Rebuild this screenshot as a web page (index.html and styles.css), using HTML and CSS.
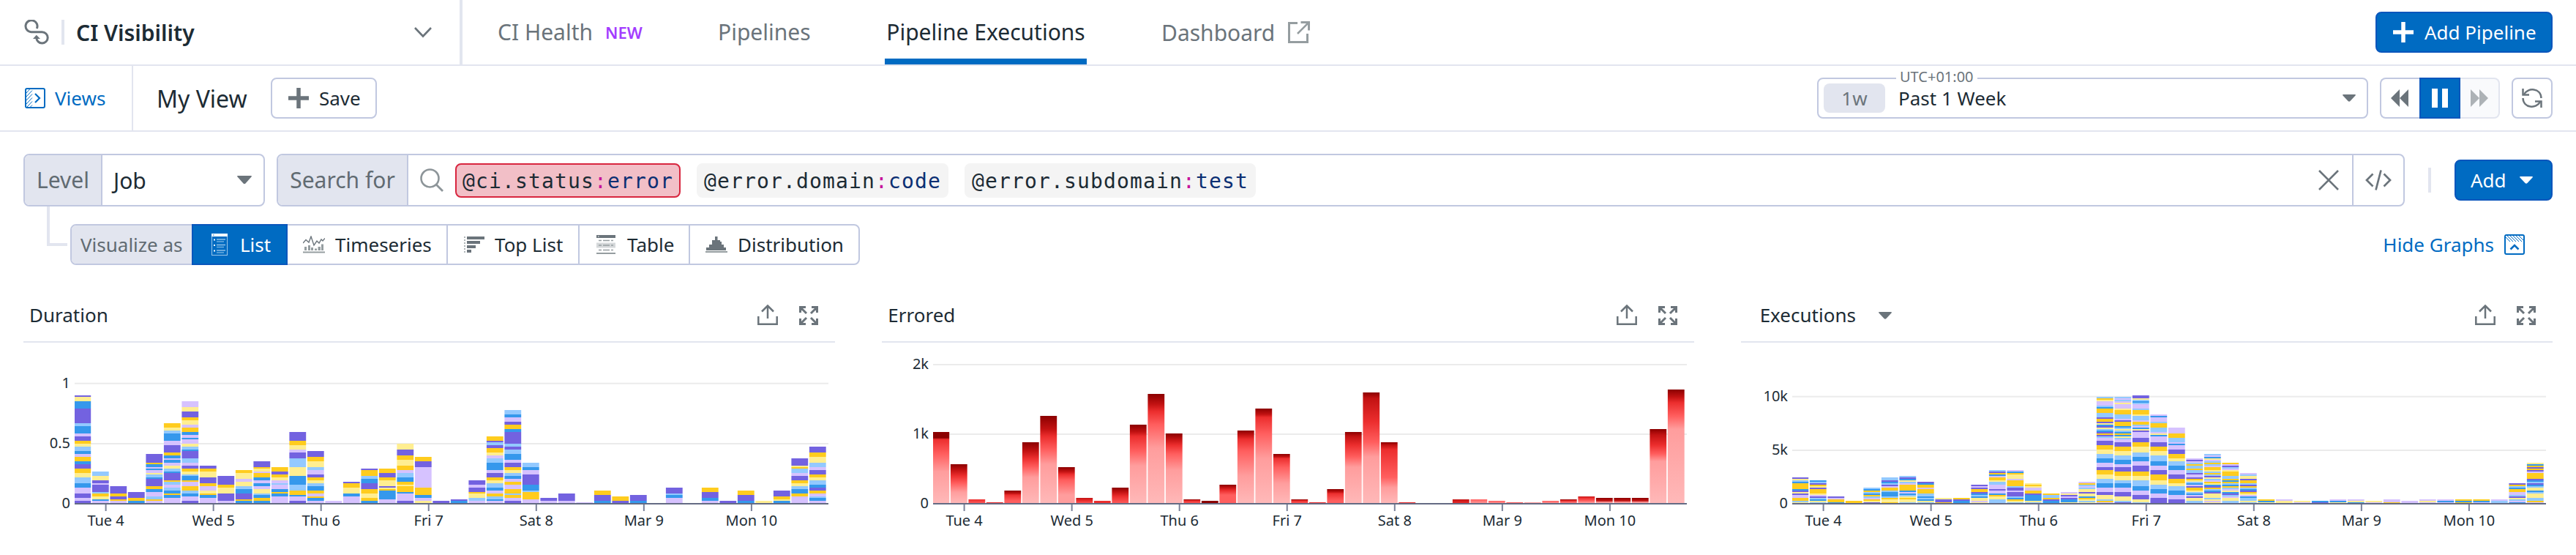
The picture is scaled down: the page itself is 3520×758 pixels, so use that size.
FILE: index.html
```html
<!DOCTYPE html>
<html lang="en">
<head>
<meta charset="utf-8">
<title>CI Visibility</title>
<link rel="stylesheet" href="styles.css">
</head>
<body>
<header class="topbar">
  <div class="product">
    <svg class="product-icon" width="34" height="34" viewBox="0 0 34 34"><path d="M17.300 12A8 8 0 1 0 9.500 16.700H24.500A7.700 7.700 0 1 1 16.800 24.500" fill="none" stroke="#6b747b" stroke-width="3"/><path d="M12 26 16.800 20.800 22 26Z" fill="#6b747b"/></svg>
    <span class="product-rule"></span>
    <span class="product-name">CI Visibility</span>
    <svg class="product-chevron" width="26" height="16" viewBox="0 0 26 16"><path d="M2 2 13 13.500 24 2" fill="none" stroke="#6b747b" stroke-width="2.600"/></svg>
  </div>
  <nav class="tabs">
    <a class="tab tab-health">CI Health<span class="new">NEW</span></a>
    <a class="tab tab-pipelines">Pipelines</a>
    <a class="tab tab-active">Pipeline Executions</a>
    <a class="tab tab-dashboard">Dashboard
      <svg width="32" height="32" viewBox="0 0 32 32" fill="none" stroke="#959da0" stroke-width="3"><path d="M14 3.500H2.500V29.500H27.500V18"/><path d="M14 18 28 4" stroke-width="2.600"/><path d="M18.500 2.500H29.500V13.500"/></svg>
    </a>
  </nav>
  <button class="btn btn-primary add-pipeline">
    <svg width="28" height="28" viewBox="0 0 28 28"><path d="M0 14H28M14 0V28" stroke="#fff" stroke-width="5.500"/></svg>
    <span>Add Pipeline</span>
  </button>
</header>

<section class="viewbar">
  <a class="views">
    <svg width="28" height="28" viewBox="0 0 28 28" fill="none" stroke="#006bc2"><rect x="1" y="1" width="26" height="26" rx="2" stroke-width="2"/><path d="M2 7 6.500 2M2 12 10 3.500M2 17 10 8.500M2 22 10 13.500M3 26 10 18.500M7 26.500 10 23.500" stroke-width="1"/><path d="M14 8 20 14 14 20" stroke-width="2.200"/></svg>
    <span>Views</span>
  </a>
  <div class="view-name">My View</div>
  <button class="btn save">
    <svg width="28" height="28" viewBox="0 0 28 28"><path d="M0 14H28M14 0V28" stroke="#6b747b" stroke-width="5.500"/></svg>
    <span>Save</span>
  </button>
  <div class="time">
    <span class="time-zone">UTC+01:00</span>
    <span class="time-badge">1w</span>
    <span class="time-label">Past 1 Week</span>
    <svg width="18" height="10" viewBox="0 0 18 10"><path d="M1 0H17Q18.500 0 17.500 1.500L10.500 9Q9 10.500 7.500 9L.5 1.500Q-.5 0 1 0Z" fill="#6b747b"/></svg>
  </div>
  <div class="playback">
    <span class="play-btn play-back"><svg width="24" height="24" viewBox="0 0 24 24"><path d="M12 0V24L0 12ZM24 0V24L12 12Z" fill="#6b747b"/></svg></span>
    <span class="play-btn play-pause"><svg width="22" height="26" viewBox="0 0 22 26"><path d="M0 0H8V26H0ZM14 0H22V26H14Z" fill="#fff"/></svg></span>
    <span class="play-btn play-forward"><svg width="24" height="24" viewBox="0 0 24 24"><path d="M0 0V24L12 12ZM12 0V24L24 12Z" fill="#adb2b6"/></svg></span>
  </div>
  <button class="btn refresh">
    <svg width="28" height="28" viewBox="0 0 28 28" fill="none" stroke="#6b747b" stroke-width="2.500"><path d="M3 9C8-1 26 0 26.500 14"/><path d="M1.500 1V9.500H10"/><path d="M1.500 14C2 28 20 29 25 19"/><path d="M18 18.500H26.500V27"/></svg>
  </button>
</section>

<main class="content">
  <section class="query">
    <div class="level">
      <span class="box-label">Level</span>
      <span class="level-value">Job</span>
      <svg width="20" height="12" viewBox="0 0 20 12"><path d="M1 0H19Q20.500 0 19.500 1.500L11.500 10.500Q10 12 8.500 10.500L.5 1.500Q-.5 0 1 0Z" fill="#6b747b"/></svg>
    </div>
    <div class="search">
      <span class="box-label search-label">Search for</span>
      <svg class="search-icon" width="32" height="32" viewBox="0 0 32 32" fill="none" stroke="#8d9599"><circle cx="13.500" cy="13.500" r="12" stroke-width="2.600"/><path d="M22 22 31 31" stroke-width="2.800"/></svg>
      <span class="chip chip-error">@ci.status<i>:</i><b>error</b></span>
      <span class="chip">@error.domain<i>:</i><b>code</b></span>
      <span class="chip">@error.subdomain<i>:</i><b>test</b></span>
      <svg class="clear" width="30" height="30" viewBox="0 0 30 30"><path d="M2 2 28 28M28 2 2 28" stroke="#6b747b" stroke-width="2.600"/></svg>
      <span class="code-toggle"><svg width="36" height="28" viewBox="0 0 36 28" fill="none" stroke="#6b747b" stroke-width="2.700"><path d="M10.500 5.500 2 14 10.500 22.500M25.500 5.500 34 14 25.500 22.500M21.500 .5 14.500 27.500"/></svg></span>
    </div>
    <span class="query-rule"></span>
    <button class="btn btn-primary add">
      <span>Add</span>
      <svg width="18" height="10" viewBox="0 0 18 10"><path d="M1 0H17Q18.500 0 17.500 1.500L10.500 9Q9 10.500 7.500 9L.5 1.500Q-.5 0 1 0Z" fill="#fff"/></svg>
    </button>
  </section>

  <section class="visualize-row">
    <span class="connector"></span>
    <div class="visualize">
      <span class="viz-label">Visualize as</span>
      <span class="viz viz-list"><svg width="22" height="30" viewBox="0 0 22 30"><rect x=".5" y=".5" width="21" height="29" fill="none" stroke="#9cc6ea"/><path d="M0 0H22V4H0Z" fill="#fff"/><path d="M2 2H3.500" stroke="#006bc2"/><path d="M3 8.500H5M3 16H5M3 23.500H5" stroke="#fff" stroke-width="2"/><path d="M7 8H19M7 15.500H19M7 23H19" stroke="#8fc0e8" stroke-width="1.500"/><path d="M7 11H17M7 18.500H17M7 26H17" stroke="#6daddf" stroke-width="1.500"/></svg>List</span>
      <span class="viz viz-time"><svg width="30" height="24" viewBox="0 0 30 24"><path d="M0 10 4 5.500 8 9 11 1 15 13 19 7 22 10 25 5 27 7 30 3.500" fill="none" stroke="#6b747b" stroke-width="1.400"/><path d="M2 15H5V20H2ZM7 13H10V20H7ZM11 16H14V20H11ZM16 17.500H19V20H16ZM20.500 15H24V20H20.500ZM25 11.500H28V20H25ZM0 21.500H30V23.500H0Z" fill="#959da0"/></svg>Timeseries</span>
      <span class="viz viz-top"><svg width="28" height="24" viewBox="0 0 28 24"><path d="M4 1H28V5H4ZM4 7H22V11H4ZM4 13H16V17H4ZM4 19H10V23H4Z" fill="#6b747b"/><path d="M1 1V24" stroke="#959da0" stroke-width="1.500" stroke-dasharray="2 2"/></svg>Top List</span>
      <span class="viz viz-table"><svg width="26" height="26" viewBox="0 0 26 26"><path d="M0 0H26V4H0Z" fill="#6b747b"/><path d="M0 10.500H26V17.500H0Z" fill="#d5d8da"/><path d="M3 7.500H7M9 7.500H18M20 7.500H23M3 14H7M9 14H18M20 14H23M3 20.500H7M9 20.500H18M20 20.500H23" stroke="#959da0" stroke-width="1.500"/><path d="M2 2H3.500" stroke="#fff"/><path d="M0 24H26V26H0Z" fill="#959da0"/></svg>Table</span>
      <span class="viz viz-dist"><svg width="30" height="22" viewBox="0 0 30 22"><path d="M1 19V15H5V11H9V5H13V0H16.500V5H20V7H22V11H25V15H28V19Z" fill="#6b747b"/><path d="M0 20H30V22H0Z" fill="#959da0"/></svg>Distribution</span>
    </div>
    <a class="hide-graphs">Hide Graphs
      <svg width="28" height="28" viewBox="0 0 28 28" fill="none" stroke="#006bc2"><rect x="1" y="1" width="26" height="26" rx="2" stroke-width="2"/><path d="M2 4 8 10M4 2 12 10M8 2 16 10M12 2 20 10M16 2 24 10M20 2 26 8" stroke-width="1"/><path d="M8.500 20.500 14 15 19.500 20.500" stroke-width="2.600"/></svg>
    </a>
  </section>

  <section class="charts">
    <article class="chart">
      <header class="chart-head"><h2>Duration</h2><span class="chart-tools"></span></header>
      <svg class="plot" data-chart="duration" width="1109" height="290"></svg>
    </article>
    <article class="chart">
      <header class="chart-head"><h2>Errored</h2><span class="chart-tools"></span></header>
      <svg class="plot" data-chart="errored" width="1109" height="290"></svg>
    </article>
    <article class="chart">
      <header class="chart-head chart-head-select"><h2>Executions</h2>
        <svg class="title-caret" width="18" height="10" viewBox="0 0 18 10"><path d="M1 0H17Q18.500 0 17.500 1.500L10.500 9Q9 10.500 7.500 9L.5 1.500Q-.5 0 1 0Z" fill="#6b747b"/></svg>
        <span class="chart-tools"></span></header>
      <svg class="plot" data-chart="executions" width="1109" height="290"></svg>
    </article>
  </section>
</main>
<script src="charts.js"></script>
</body>
</html>
```
FILE: styles.css
```css
* { box-sizing: border-box; }
body {
  margin: 0;
  width: 3520px;
  height: 758px;
  overflow: hidden;
  background: #fff;
  color: #1c2b34;
  font-family: "Noto Sans", "Open Sans", sans-serif;
  font-size: 26px;
  white-space: nowrap;
}
svg { display: block; flex: none; }
h2 { margin: 0; font-size: 26px; font-weight: 400; }
a { color: inherit; }

.btn {
  display: flex;
  align-items: center;
  height: 56px;
  padding: 0;
  border: 2px solid #c1c8e0;
  border-radius: 8px;
  background: #fff;
  color: #1c2b34;
  font: inherit;
}
.btn-primary { background: #006bc2; border-color: #0a56bc; color: #fff; }

/* Top bar */
.topbar { display: flex; align-items: center; height: 90px; border-bottom: 2px solid #e2e5ef; }
.product { display: flex; align-items: center; width: 632px; height: 88px; padding-left: 33px; border-right: 4px solid #e2e5ef; }
.product-rule { width: 4px; height: 34px; margin: 0 16px 0 17px; background: #e2e5ef; }
.product-name { width: 461px; font-size: 30px; font-weight: 600; }
.tabs { display: flex; flex: 1; height: 88px; font-size: 30px; line-height: 87px; color: #6b747b; }
.tab-health { display: flex; width: 301px; margin-left: 48px; }
.new { margin-left: 17px; color: #a33cff; font-size: 22px; font-weight: 600; line-height: 89px; }
.tab-pipelines { width: 228px; }
.tab-active { width: 276px; border-bottom: 8px solid #006bc2; color: #1c2b34; text-align: center; }
.tab-dashboard { display: flex; align-items: center; gap: 17px; margin-left: 102px; }
.add-pipeline { width: 242px; margin-right: 32px; padding-left: 22px; gap: 15px; }

/* View bar */
.viewbar { display: flex; align-items: center; height: 90px; border-bottom: 2px solid #e2e5ef; }
.views { display: flex; align-items: center; gap: 13px; width: 182px; height: 88px; padding-left: 34px; border-right: 2px solid #e2e5ef; color: #006bc2; }
.view-name { width: 188px; padding-left: 32px; font-size: 32px; }
.save { width: 145px; padding-left: 22px; gap: 14px; }
.time { position: relative; display: flex; align-items: center; width: 753px; height: 56px; margin-left: auto; padding: 0 15px 0 7px; border: 2px solid #c1c8e0; border-radius: 8px; }
.time-zone { position: absolute; left: 106px; top: -17px; padding: 0 5px; background: #fff; color: #6b747b; font-size: 20px; line-height: 28px; }
.time-badge { width: 84px; height: 40px; border-radius: 8px; background: #e2e5ef; color: #6b747b; line-height: 40px; text-align: center; }
.time-label { flex: 1; padding-left: 18px; }
.playback { display: flex; margin-left: 16px; }
.play-btn { display: flex; align-items: center; justify-content: center; width: 54px; height: 56px; border: 2px solid #c1c8e0; }
.play-back { padding-right: 2px; border-right: 0; border-radius: 8px 0 0 8px; }
.play-pause { width: 56px; background: #006bc2; border-color: #0a56bc; }
.play-forward { border-color: #e2e5ef; border-left: 0; border-radius: 0 8px 8px 0; background: #f9fafc; }
.refresh { width: 56px; margin: 0 32px 0 16px; justify-content: center; }

/* Query row */
.content { padding: 30px 32px 0; }
.query { display: flex; align-items: center; height: 72px; }
.level, .search { display: flex; align-items: center; height: 72px; border: 2px solid #c1c8e0; border-radius: 8px; font-size: 30px; }
.level { width: 330px; }
.box-label { width: 106px; height: 68px; border-right: 2px solid #c1c8e0; border-radius: 6px 0 0 6px; background: #e2e5ef; color: #616b72; line-height: 67px; text-align: center; }
.level-value { width: 184px; padding-left: 15px; }
.search { width: 2908px; margin-left: 16px; }
.search-label { width: 178px; }
.search-icon { margin: 0 15px 0 16px; }
.chip { height: 47px; margin-right: 22px; padding: 1px 10px 0; border-radius: 8px; background: #f4f4f4; font-family: "DejaVu Sans Mono", "Liberation Mono", monospace; font-size: 28px; letter-spacing: 1.140px; line-height: 47px; }
.chip i { color: #c6139b; font-style: normal; }
.chip b { color: #0b2f73; font-weight: 400; }
.chip-error { margin-left: 1px; padding: 0 8px; border: 2px solid #d8263f; background: #f2bfc7; line-height: 45px; }
.clear { margin-left: auto; margin-right: 17px; }
.code-toggle { display: flex; align-items: center; justify-content: center; width: 70px; height: 68px; border-left: 2px solid #c1c8e0; }
.query-rule { width: 4px; height: 34px; margin: 0 32px; background: #e2e5ef; }
.add { width: 134px; padding-left: 20px; gap: 18px; }

/* Visualization picker */
.visualize-row { display: flex; height: 80px; }
.connector { width: 28px; height: 54px; margin: 0 4px 0 32px; border: solid #e2e5ef; border-width: 0 0 4px 4px; }
.visualize { display: flex; width: 1079px; height: 56px; margin-top: 24px; border: 2px solid #c1c8e0; border-radius: 8px; }
.viz-label { width: 164px; border-radius: 6px 0 0 6px; background: #e2e5ef; color: #616b72; line-height: 52px; padding-left: 12px; }
.viz { display: flex; align-items: center; border-right: 2px solid #c1c8e0; }
.viz-list { width: 131px; height: 56px; margin-top: -2px; padding-left: 25px; gap: 17px; border: 2px solid #0a56bc; background: #006bc2; color: #fff; }
.viz-time { width: 219px; padding-left: 21px; gap: 14px; }
.viz-top { width: 180px; padding-left: 22px; gap: 14px; }
.viz-table { width: 151px; padding-left: 23px; gap: 16px; }
.viz-dist { padding-left: 21px; gap: 14px; border: 0; }
.hide-graphs { display: flex; align-items: center; gap: 14px; height: 56px; margin: 24px 38px 0 auto; color: #006bc2; }

/* Charts */
.charts { display: grid; grid-template-columns: repeat(3, 1fr); gap: 64px; padding-top: 34px; }
.chart-head { display: flex; align-items: center; height: 72px; padding: 0 23px 0 8px; border-bottom: 2px solid #e2e5ef; }
.chart-head h2 { padding-bottom: 2px; }
.chart-head-select { padding-left: 26px; }
.title-caret { margin-left: 31px; }
.chart-tools { display: flex; gap: 29px; margin-left: auto; padding-bottom: 2px; }
.plot { overflow: visible; }
.plot text { fill: #1c2b34; font-size: 20px; }
.y-label { text-anchor: end; }
.x-label { text-anchor: middle; }
```
FILE: charts.js
```js
const NS = "http://www.w3.org/2000/svg";
const UNIT = 2;          // height of one stack unit in px
const BASE = 149;        // unit index of the zero line
const PLOT_TOP = -78;    // unit 0 relative to the top of the plot
const LEFT = 70;
const WIDTH = 1030;
const PITCH = 24.5;
const BAR = 22.8;

const STACK = { P: "#7362e0", L: "#d6c2ff", B: "#3598ec", S: "#93c9ff", Y: "#ffcc1e", C: "#ffee91" };
const HEAT = { a: "#8b0000", b: "#c21212", c: "#ec2e2e", d: "#ff5e5e", e: "#ff9d9d", f: "#ffb9b9" };

// Each bar is a run of <top unit><colour key>, from the top down.
const CHARTS = {
  duration: {
    ticks: [["1", 55.7], ["0.5", 138], ["0", 220]],
    bars: `75P76C79B84P94S96B101L103P106Y108C110S113B115L117Y120B122P125Y128C131S135B138L142P145L147P
127S130C133P135L136P141S142Y144C146B147L
137P142Y144P146Y147L
141P145Y147B
115P121Y122B124L125B126L128C129S131B132P137Y139B141L144S146Y147L
94Y97C99S101B106L109P114Y116B118L119B121L123C125S127B128P133Y134S136L138S140B142Y143B145L
79L83C86P90Y92C95L97Y100B102L104B105L108C110S112B113P118S121L123P125Y127C129S130B133Y134L137Y140S142B144L147P
123P125Y127C131P135Y137L140C142Y143B145L
130P136Y138C142P147L
126Y128C132L134C137S139B142P146Y147B
120P124Y125C127L128Y131B133L135B137L139C142S143B145Y147B
124Y127P129Y131C133L135S136L139B141Y142B144L
100P106Y109C112L114P118S124C130B136S140Y143B144L147P
113P117Y120C124S126L129P131Y133C135S137B140Y142L144Y145B147L
147L
134P135Y138C142B144L
125P126Y130S132B135P139Y142C145Y147B
125Y128P131Y133C137P138C139Y140B146L
108C112P116Y119C123Y126L128S131B134Y136C137Y141B142L147P
117Y120P124L138Y143B145L147C
147P
146P147B
133P136L138P141Y142C145S147L
103Y106P107S109P111Y114C116L118S121B126L128P131Y133C135S138B140L142Y144S146B147L
85S88B90L93P95Y98B100P108S110P112S115B119L121P124Y126C128S130B132L134Y136L139Y142S143Y145L147P
121S124B126L129P136B140S141Y146L
145P147L
142P147L
148L
140Y143P147B
144Y147P
143P147B
-
138P142S143B145L
-
138Y141P145B147L
147P
140Y143P147B
147C
140P144Y146C147B
118P123C124Y125S128L130P133Y135C137S139B142Y144L
110P114Y117C121S124L126P129Y131C133S136B138P140Y142L144S145B147L`
  },
  errored: {
    heat: true,
    ticks: [["2k", 30], ["1k", 125], ["0", 220]],
    bars: `100a104a105c115d127e149f
122a126b130c135d141e149f
146c149d
148c149c
140a142b143c147d149d
107a113b118c124d131e149f
89a98b103c112d122e149f
124a127b129c133d143e149e
145b147c149d
147c149c
138a141b144c149d
95a100b103c113d123e149f
74a81b86c95d111e149f
101a105b109c115d126e149f
146a147c149d
147a149a
136a138b140c143d149d
99a102b105c113d130e149f
84a88b90c101d118e149f
115a117b118c124d135e149f
146a147c149d
148c149c
139a141b142c147d149d
100a103b109c117d124e149f
73a77b93c107d117e149f
107a109b112c131d138e149f
148c149c
-
-
146b149c
146d149e
147d149e
148d149d
148e149e
147d149e
146a147c149e
144b145c147d149f
145a147b148e149f
145a147b148e149f
145a147b148e149f
98a102b109c115d120e149f
71a76b80c89d98e149f`
  },
  executions: {
    ticks: [["10k", 73.7], ["5k", 147], ["0", 220]],
    bars: `131P132C133S134B135Y139B140P141C142P143L145Y147S148C
133B134S135P136Y137C138P139Y142C143L144P145S146B147C148S
144P145L146Y148B
147Y
138S139B140Y141S142B143Y144S145L146Y147C148P
131S133P134B135S136P137L138Y140S141B144S145Y146C148Y
130S131P132B133C134S135L136Y140B141L142B143S144C145Y146C148S
134P135B136Y138L139Y142S144B145S146B147C148S
145C146P148Y
145Y146P147B
136P137L138P139Y141P142B143S144B145C147L148C
126S127P128Y129B130L131Y133C134S136L139P140L142B143Y144C146S
126L127B128Y129C132L133Y137S138P140L141P143P144S145B146Y147C148S
135C136Y137C138L140Y142P143B147C148S
142Y143S145Y146P147B
141L142C143P144L145P146B148C
134L135Y136S137L138S139C141P142C144B145Y146C147S148C
76S77Y78C79L82S83B84Y87S90P91Y93P94C95B96P97C98S99B100P101Y102P103S104L106P109Y112C115S118B121L124P126Y129C132S135B138L141P143C146S147Y148L
76S77L78S79L80C81L84C85Y88S91L92P93Y96B97S98C99S100B101Y102B103C104S105L107P110Y113C116S119B122L124P127Y130C133S135B138L141P144C147S148P
75P77C78S79B80S81L84S85Y88C89S92L93Y95S96L97B98C99P100L104P107Y110C114S117B120L123P127Y130C133S137B140L143P146C148S
88L89B90L93S94Y97S100L101C102B103L107P110Y113C116S120B123L126P129Y133C136S139B142L145P
97L101Y104S107L108B109L112P115Y118C120S123B126L129P132Y135C137S140B143L146P
118L119P120L121S122Y123S125Y126S128P129L131P132Y133C134S135B136L137P138Y140C141S142B143L144P145C147S
115S116L117B118C119L120S121Y122S123L124Y126C127S128Y129S130P131C132S133L134Y135C136B137P138Y139S140B141P142C145S146C147L148C
121Y122L123P124S125L126C127Y130S132Y133B134Y135S136B137Y138S139L140C141B142P143S144L145C147S
128L129S130C132P133Y135S136P137Y138S139B140P141Y142C143L144B145S147C148S
146Y147B148C
146L147C
147C148L
147B148P
146L147B148C
146L147C148B
147C148L
146L148Y
147L
146L147C148L
146L147B148L
146Y147B148Y
146Y147B148L
146L147S
135P136Y137S138B139Y141L143S144P145C146S147L148B
121C122B123Y124P125Y126P127L128Y132P133B134S135P136B137S138C140B141S142C145S147Y148L`
  }
};
const DAYS = ["Tue 4", "Wed 5", "Thu 6", "Fri 7", "Sat 8", "Mar 9", "Mon 10"];

function add(parent, tag, attrs, text) {
  const node = document.createElementNS(NS, tag);
  for (const key in attrs) node.setAttribute(key, attrs[key]);
  if (text) node.textContent = text;
  parent.appendChild(node);
  return node;
}

document.querySelectorAll(".plot").forEach(svg => {
  const name = svg.dataset.chart;
  const chart = CHARTS[name];
  const defs = add(svg, "defs", {});

  chart.ticks.forEach(([label, y]) => {
    if (label !== "0") add(svg, "rect", { x: LEFT, y: y - 1, width: WIDTH, height: 2, fill: "#ebebeb" });
    add(svg, "text", { class: "y-label", x: 64, y: y + 6 }, label);
  });

  chart.bars.split("\n").forEach((row, i) => {
    const parts = [...row.matchAll(/(\d+)([A-Za-z])/g)].map(m => [Number(m[1]), m[2]]);
    if (!parts.length) return;
    const x = Math.max(LEFT, LEFT - 0.6 + PITCH * i);
    const width = LEFT - 0.6 + PITCH * i + BAR - x;
    if (chart.heat) {
      const top = parts[0][0];
      const grad = add(defs, "linearGradient", { id: name + i, x1: 0, y1: 0, x2: 0, y2: 1 });
      parts.forEach(([at, key]) => add(grad, "stop", { offset: (at - top) / (BASE - top), "stop-color": HEAT[key] }));
      add(svg, "rect", { x, width, y: PLOT_TOP + top * UNIT, height: (BASE - top) * UNIT, fill: `url(#${name + i})` });
      return;
    }
    parts.forEach(([at, key], j) => {
      const end = j + 1 < parts.length ? parts[j + 1][0] : BASE;
      add(svg, "rect", { x, width, y: PLOT_TOP + at * UNIT, height: (end - at) * UNIT, fill: STACK[key] });
    });
  });

  add(svg, "rect", { x: LEFT, y: 219, width: WIDTH, height: 2, fill: "#646b84" });
  DAYS.forEach((day, i) => {
    const x = 112.6 + 147.05 * i;
    add(svg, "rect", { x: x - 1, y: 221, width: 2, height: 9, fill: "#7c839a" });
    add(svg, "text", { class: "x-label", x, y: 250 }, day);
  });
});

document.querySelectorAll(".chart-tools").forEach(tools => {
  tools.innerHTML =
    `<svg width="28" height="28" viewBox="0 0 28 28" fill="none" stroke="#6b747b" stroke-width="2.500"><path d="M1.300 16V26.700H26.700V16M14 19V2M6 9.500 14 1.500 22 9.500"/></svg>` +
    `<svg width="26" height="28" viewBox="0 0 26 28" fill="none" stroke="#6b747b" stroke-width="3"><path d="M9 3.500H1.500V11M2 4 10 12M17 3.500H24.500V11M24 4 16 12M9 26.500H1.500V19M2 26 10 18M17 26.500H24.500V19M24 26 16 18"/></svg>`;
});
```
